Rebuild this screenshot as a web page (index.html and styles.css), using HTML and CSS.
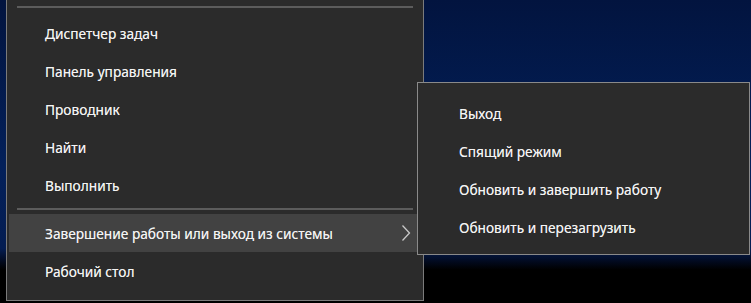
FILE: index.html
```html
<!DOCTYPE html>
<html lang="ru">
<head>
    <meta charset="UTF-8">
    <meta name="viewport" content="width=device-width, initial-scale=1.0">
    <title>Меню Win+X</title>
    <link rel="stylesheet" href="styles.css">
</head>
<body>
    <div class="desktop">
        <div class="menu">
            <div class="sep"></div>
            <div class="item">Диспетчер задач</div>
            <div class="item">Панель управления</div>
            <div class="item">Проводник</div>
            <div class="item">Найти</div>
            <div class="item">Выполнить</div>
            <div class="sep sep-mid"></div>
            <div class="item active">
                <span>Завершение работы или выход из системы</span>
                <svg class="chev" width="10" height="18" viewBox="0 0 10 18">
                    <polyline points="1.5,1.5 8.5,9 1.5,16.5" fill="none" stroke="#c9c9c9" stroke-width="1.3"/>
                </svg>
            </div>
            <div class="item">Рабочий стол</div>

            <div class="submenu">
                <div class="item">Выход</div>
                <div class="item">Спящий режим</div>
                <div class="item">Обновить и завершить работу</div>
                <div class="item">Обновить и перезагрузить</div>
            </div>
        </div>
    </div>
</body>
</html>
```

FILE: styles.css
```css
body {
    margin: 0;
    font-family: "Noto Sans", "Open Sans", sans-serif;
    background-color: #000;
}
.desktop {
    width: 751px;
    height: 303px;
    overflow: hidden;
    background: linear-gradient(to bottom, #02143f 0%, #03205a 55%, #041d52 82%, #020b22 86%, #000 89%, #000 100%);
}
.menu {
    position: relative;
    box-sizing: border-box;
    width: 418px;
    height: 301px;
    margin-left: 6px;
    padding: 6px 0 10px;
    background-color: #2b2b2b;
    border: 1px solid #7b7b7b;
    border-top: none;
}
.sep {
    height: 2px;
    margin: 0 10px 6px;
    background-color: #5c5c5c;
}
.sep-mid {
    margin: 4px 10px 4px;
}
.item {
    display: flex;
    align-items: center;
    height: 38px;
    padding-left: 38px;
    color: #f4f4f4;
    font-size: 13.7px;
    text-shadow: 0 0 0.6px rgba(255, 255, 255, 0.6);
}
.item.active {
    justify-content: space-between;
    margin: 0 2px;
    padding-left: 36px;
    padding-right: 10px;
    background-color: #424242;
}
.chev {
    display: block;
}
.submenu {
    position: absolute;
    left: 410px;
    top: 82px;
    box-sizing: border-box;
    width: 333px;
    height: 173px;
    padding: 11px 0 9px;
    background-color: #2b2b2b;
    border: 1px solid #8a8a8a;
}
.submenu .item {
    padding-left: 41px;
}
```
